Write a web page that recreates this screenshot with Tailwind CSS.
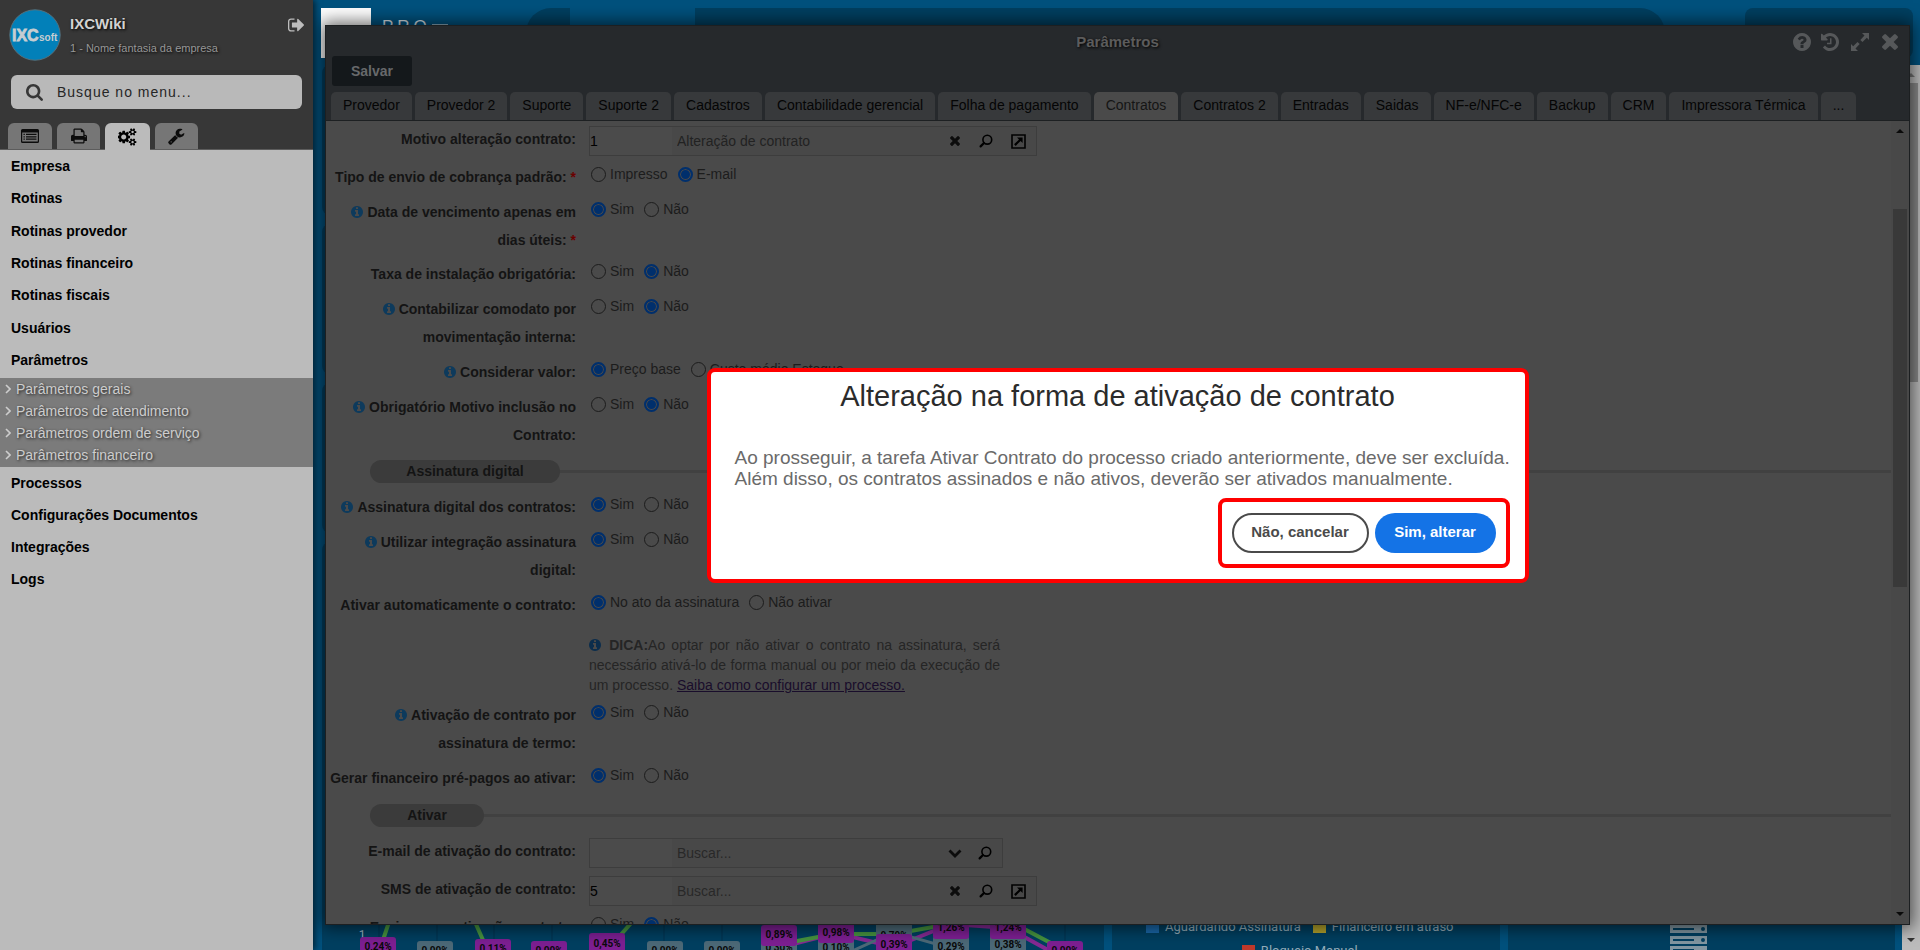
<!DOCTYPE html>
<html lang="pt-BR">
<head>
<meta charset="utf-8">
<meta name="viewport" content="width=device-width, initial-scale=1">
<title>IXCWiki - Parâmetros</title>
<script src="https://cdn.jsdelivr.net/npm/@tailwindcss/browser@4"></script>
</head>
<body class="flex h-screen overflow-hidden bg-[#00517d] font-['Liberation_Sans',Arial,sans-serif] text-sm text-black">

<svg class="hidden" aria-hidden="true">
  <symbol id="i-info" viewBox="128 128 1536 1536"><path d="M1152 1376v-160q0-14-9-23t-23-9h-96v-512q0-14-9-23t-23-9h-320q-14 0-23 9t-9 23v160q0 14 9 23t23 9h96v320h-96q-14 0-23 9t-9 23v160q0 14 9 23t23 9h448q14 0 23-9t9-23zm-128-896v-160q0-14-9-23t-23-9h-192q-14 0-23 9t-9 23v160q0 14 9 23t23 9h192q14 0 23-9t9-23zm640 416q0 209-103 385.500t-279.500 279.500-385.500 103-385.500-103-279.500-279.500-103-385.500 103-385.500 279.500-279.500 385.500-103 385.500 103 279.500 279.500 103 385.500z"/></symbol>
  <symbol id="i-search" viewBox="64 128 1664 1664"><path d="M1216 832q0-185-131.500-316.500t-316.500-131.500-316.500 131.500-131.500 316.500 131.500 316.500 316.500 131.500 316.500-131.500 131.500-316.500zm512 832q0 52-38 90t-90 38q-54 0-90-38l-343-342q-179 124-399 124-143 0-273.500-55.500t-225-150-150-225-55.500-273.500 55.500-273.500 150-225 225-150 273.500-55.500 273.500 55.500 225 150 150 225 55.500 273.500q0 220-124 399l343 343q37 37 37 90z"/></symbol>
  <symbol id="i-times" viewBox="302 302 1188 1188"><path d="M1490 1322q0 40-28 68l-136 136q-28 28-68 28t-68-28l-294-294-294 294q-28 28-68 28t-68-28l-136-136q-28-28-28-68t28-68l294-294-294-294q-28-28-28-68t28-68l136-136q28-28 68-28t68 28l294 294 294-294q28-28 68-28t68 28l136 136q28 28 28 68t-28 68l-294 294 294 294q28 28 28 68z" transform="translate(0 -64)"/></symbol>
  <symbol id="i-lupa" viewBox="0 0 14 14"><circle cx="8.300" cy="5.700" r="4.400" fill="none" stroke="currentColor" stroke-width="1.600"/><path d="M5 9 1.600 12.400" fill="none" stroke="currentColor" stroke-width="2.200" stroke-linecap="round"/></symbol>
  <symbol id="i-open" viewBox="0 0 15 15"><path d="M1 1h13v13H1z" fill="none" stroke="currentColor" stroke-width="1.600"/><path d="M6 3.400h5.600V9l-2-2-4.900 4.900-1.600-1.600L8 5.400z"/></symbol>
  <symbol id="i-down" viewBox="0 0 14 14"><path d="M1.500 4.500 7 10l5.500-5.500" fill="none" stroke="currentColor" stroke-width="2.800"/></symbol>
  <symbol id="i-right" viewBox="0 0 6 10"><path d="M1 1l4 4-4 4" fill="none" stroke="currentColor" stroke-width="1.600"/></symbol>
</svg>

<!-- Menu lateral -->
<aside class="z-20 flex w-[313px] shrink-0 flex-col bg-[#bbbbbb] shadow-[2px_0_6px_rgba(0,0,0,0.6)]">
  <header class="bg-[#373737]">
    <div class="flex items-start pt-[9px] pr-[9px] pl-[9px]">
      <svg class="size-[52px] shrink-0" viewBox="0 0 52 52" role="img" aria-label="IXCsoft">
        <circle cx="26" cy="26" r="25.200" fill="#0280b9" stroke="#55707c" stroke-width="1"/>
        <text x="3" y="32" fill="#c6cdd1" stroke="#c6cdd1" stroke-width=".8" font-family="Liberation Sans" font-weight="bold" font-size="16">IXC</text>
        <text x="30" y="32" fill="#c6cdd1" font-family="Liberation Sans" font-weight="bold" font-size="10">soft</text>
      </svg>
      <div class="flex-1 pl-[9px]">
        <h1 class="pt-[6px] text-[15px] leading-[18px] font-bold text-[#d2d2d2] [text-shadow:1px_1px_3px_#000]">IXCWiki</h1>
        <p class="pt-[8px] text-[11px] leading-[14px] text-[#979797] [text-shadow:1px_1px_3px_#000]">1 - Nome fantasia da empresa</p>
      </div>
      <button type="button" class="mt-[9px] text-[#bdbdbd]" aria-label="Sair"><svg class="h-[14px] w-4" viewBox="64 224 1568 1344" fill="currentColor"><path d="M704 1440q0 4 1 20t.5 26.500-3 23.500-10 19.500-20.500 6.500h-320q-119 0-203.500-84.500t-84.500-203.500v-704q0-119 84.500-203.500t203.500-84.500h320q13 0 22.500 9.500t9.500 22.500q0 4 1 20t.5 26.500-3 23.500-10 19.500-20.500 6.500h-320q-66 0-113 47t-47 113v704q0 66 47 113t113 47h312l11.500 1 11.500 3 8 5.500 7 9 2 13.500zm928-544q0 26-19 45l-544 544q-19 19-45 19t-45-19-19-45v-288h-448q-26 0-45-19t-19-45v-384q0-26 19-45t45-19h448v-288q0-26 19-45t45-19 45 19l544 544q19 19 19 45z"/></svg></button>
    </div>
    <label class="mx-[11px] mt-[14px] flex h-[34px] items-center rounded-md bg-[#b9b9b9] pl-[15px]">
      <svg class="size-[17px] shrink-0 text-[#373737]" fill="currentColor"><use href="#i-search"/></svg>
      <input type="text" aria-label="Busque no menu" placeholder="Busque no menu..." class="ml-[14px] min-w-0 flex-1 bg-transparent tracking-[1px] text-[#222] outline-none placeholder:text-[#262626]">
    </label>
    <nav class="mt-[14px] flex h-[27px] items-stretch gap-[5px] border-b border-[#5c5c5c] pl-2 text-[#0c0c0c]">
      <button type="button" aria-label="Lista" class="flex w-11 items-center justify-center rounded-t-md bg-[#767676]"><svg class="h-[14px] w-[18px]" viewBox="0 0 18 14" fill="currentColor"><path fill-rule="evenodd" d="M1.500 0h15A1.500 1.500 0 0 1 18 1.500v11a1.500 1.500 0 0 1-1.500 1.500h-15A1.500 1.500 0 0 1 0 12.500v-11A1.500 1.500 0 0 1 1.500 0zM1.200 3.500v9h15.600v-9z"/><path d="M2.500 4.800h1.300V6H2.500zM5 4.800h10.500V6H5zM2.500 7.200h1.300v1.200H2.500zM5 7.200h10.500v1.200H5zM2.500 9.600h1.300v1.200H2.500zM5 9.600h10.500v1.200H5z"/></svg></button>
      <button type="button" aria-label="Imprimir" class="flex w-[43px] items-center justify-center rounded-t-md bg-[#767676]"><svg class="size-4" viewBox="64 128 1664 1536" fill="currentColor"><path d="M448 1536h896v-256h-896v256zm0-640h896v-384h-160q-40 0-68-28t-28-68v-160h-640v640zm1152 64q0-26-19-45t-45-19-45 19-19 45 19 45 45 19 45-19 19-45zm128 0v416q0 13-9.500 22.500t-22.500 9.500h-224v160q0 40-28 68t-68 28h-960q-40 0-68-28t-28-68v-160h-224q-13 0-22.500-9.500t-9.500-22.500v-416q0-79 56.500-135.500t135.500-56.500h64v-544q0-40 28-68t68-28h672q40 0 88 20t76 48l152 152q28 28 48 76t20 88v256h64q79 0 135.500 56.500t56.500 135.500z"/></svg></button>
      <button type="button" aria-label="Configurações" class="-mb-[2px] flex w-[45px] items-center justify-center rounded-t-md bg-[#bbbbbb] text-black"><svg class="h-[18px] w-[19px]" viewBox="0 0 1920 1792" fill="currentColor"><path d="M832 896q0-106-75-181t-181-75-181 75-75 181 75 181 181 75 181-75 75-181zm768 512q0-52-38-90t-90-38-90 38-38 90q0 53 37.500 90.500t90.500 37.500 90.500-37.500 37.500-90.500zm0-1024q0-52-38-90t-90-38-90 38-38 90q0 53 37.500 90.500t90.500 37.500 90.500-37.500 37.500-90.500zm-384 421v185q0 10-7 19.500t-16 10.500l-155 24q-11 35-32 76 34 48 90 115 7 11 7 20 0 12-7 19-23 30-82.500 89.500t-78.500 59.500q-11 0-21-7l-115-90q-37 19-77 31-11 108-23 155-7 24-30 24h-186q-11 0-20-7.500t-10-17.500l-23-153q-34-10-75-31l-118 89q-7 7-20 7-11 0-21-8-144-133-144-160 0-9 7-19 10-14 41-53t47-61q-23-44-35-82l-152-24q-10-1-17-9.500t-7-19.500v-185q0-10 7-19.500t16-10.500l155-24q11-35 32-76-34-48-90-115-7-11-7-20 0-12 7-20 22-30 82-89t79-59q11 0 21 7l115 90q34-18 77-32 11-108 23-154 7-24 30-24h186q11 0 20 7.500t10 17.500l23 153q34 10 75 31l118-89q8-7 20-7 11 0 21 8 144 133 144 160 0 8-7 19-12 16-42 54t-45 60q23 48 34 82l152 23q10 2 17 10.500t7 19.500zm640 533v140q0 16-149 31-12 27-30 52 51 113 51 138 0 4-4 7-122 71-124 71-8 0-46-47t-52-68q-20 2-30 2t-30-2q-14 21-52 68t-46 47q-2 0-124-71-4-3-4-7 0-25 51-138-18-25-30-52-149-15-149-31v-140q0-16 149-31 13-29 30-52-51-113-51-138 0-4 4-7 4-2 35-20t59-34 30-16q8 0 46 46.500t52 67.500q20-2 30-2t30 2q51-71 92-112l6-2q4 0 124 70 4 3 4 7 0 25-51 138 17 23 30 52 149 15 149 31zm0-1024v140q0 16-149 31-12 27-30 52 51 113 51 138 0 4-4 7-122 71-124 71-8 0-46-47t-52-68q-20 2-30 2t-30-2q-14 21-52 68t-46 47q-2 0-124-71-4-3-4-7 0-25 51-138-18-25-30-52-149-15-149-31v-140q0-16 149-31 13-29 30-52-51-113-51-138 0-4 4-7 4-2 35-20t59-34 30-16q8 0 46 46.500t52 67.500q20-2 30-2t30 2q51-71 92-112l6-2q4 0 124 70 4 3 4 7 0 25-51 138 17 23 30 52 149 15 149 31z"/></svg></button>
      <button type="button" aria-label="Ferramentas" class="flex w-[43px] items-center justify-center rounded-t-md bg-[#767676]"><svg class="size-[17px]" viewBox="64 64 1728 1728" fill="currentColor"><path d="M448 1472q0-26-19-45t-45-19-45 19-19 45 19 45 45 19 45-19 19-45zm644-420l-682 682q-37 37-90 37-52 0-91-37l-106-108q-38-36-38-90 0-53 38-91l681-681q39 98 114.500 173.500t173.500 114.500zm634-435q0 39-23 106-47 134-164.500 217.500t-258.500 83.500q-185 0-316.500-131.500t-131.500-316.500 131.500-316.500 316.500-131.500q58 0 121.500 16.500t107.500 46.500q16 11 16 28t-16 28l-293 169v224l193 107q5-3 79-48.500t135.500-81 70.500-35.500q15 0 23.500 10t8.500 25z"/></svg></button>
    </nav>
  </header>
  <nav class="font-bold">
    <ul class="grid h-[228px] grid-rows-7 items-center pb-[2px] pl-[11px] leading-4">
      <li><a href="#">Empresa</a></li>
      <li><a href="#">Rotinas</a></li>
      <li><a href="#">Rotinas provedor</a></li>
      <li><a href="#">Rotinas financeiro</a></li>
      <li><a href="#">Rotinas fiscais</a></li>
      <li><a href="#">Usuários</a></li>
      <li><a href="#">Parâmetros</a></li>
    </ul>
    <ul class="bg-[#7b7b7b] pb-px leading-[22px] font-normal text-[#cdcdcd] [text-shadow:1px_1px_3px_#222]">
      <li><a href="#" class="flex items-center gap-[5px] pl-[5px]"><svg class="h-[10px] w-[6px]"><use href="#i-right"/></svg>Parâmetros gerais</a></li>
      <li><a href="#" class="flex items-center gap-[5px] pl-[5px]"><svg class="h-[10px] w-[6px]"><use href="#i-right"/></svg>Parâmetros de atendimento</a></li>
      <li><a href="#" class="flex items-center gap-[5px] pl-[5px]"><svg class="h-[10px] w-[6px]"><use href="#i-right"/></svg>Parâmetros ordem de serviço</a></li>
      <li><a href="#" class="flex items-center gap-[5px] pl-[5px]"><svg class="h-[10px] w-[6px]"><use href="#i-right"/></svg>Parâmetros financeiro</a></li>
    </ul>
    <ul class="grid h-[130px] grid-rows-4 items-center pb-[2px] pl-[11px] leading-4">
      <li><a href="#">Processos</a></li>
      <li><a href="#">Configurações Documentos</a></li>
      <li><a href="#">Integrações</a></li>
      <li><a href="#">Logs</a></li>
    </ul>
  </nav>
</aside>

<main class="relative flex min-w-0 flex-1 flex-col">
  <!-- Painel atrás da janela -->
  <div class="flex h-[65px] shrink-0 pt-2 pr-[7px] pl-2 text-white">
    <div class="size-[50px] bg-white"></div>
    <p class="pt-[9px] pl-[11px] text-[17px] leading-5 tracking-[4px] text-[#d5dfe5]">PRO</p>
    <div class="mt-[16px] ml-px h-px w-4 bg-[#8fb0c2]"></div>
    <div class="ml-auto flex w-[1387px] shrink-0">
      <div class="h-[50px] w-[44px] rounded-l-[25px] bg-[#003f60]"></div>
      <div class="ml-[125px] h-[50px] w-[970px] rounded-r-[25px] bg-[#003f60]"></div>
      <div class="ml-auto h-[50px] w-[168px] rounded-lg bg-[#003f60]"></div>
    </div>
  </div>
  <div class="flex min-h-0 flex-1">
    <div class="flex min-w-0 flex-1 flex-col gap-[9px] pr-[7px] pl-[9px]">
      <div class="h-[150px] shrink-0 rounded-lg bg-[#003f60]"></div>
      <div class="h-[150px] shrink-0 rounded-lg bg-[#003f60]"></div>
      <div class="h-[150px] shrink-0 rounded-lg bg-[#003f60]"></div>
      <div class="flex min-h-0 flex-1 items-stretch gap-2">
        <section class="flex w-[782px] shrink-0 flex-col justify-end rounded-t-lg bg-[#003f60]">
          <svg class="h-[26px] w-full" viewBox="322 924 782 26" preserveAspectRatio="xMinYMin slice" font-family="Roboto" font-size="10" font-weight="bold" text-anchor="middle" role="img" aria-label="Gráfico de percentuais">
            <path d="M379 924v26M437 924v26M494 924v26M552 924v26M664 924v26M722 924v26M1065 924v26" stroke="#00334e"/>
            <g fill="none" stroke-width="4">
              <path d="M780 945l17-2 39-10 58 14 57-23 57 4 40 22" stroke="#852a93"/>
              <path d="M850 952l44-20 70 20" stroke="#4c6977" stroke-width="3"/>
              <path d="M389 922l-6 18M475 922l8 18M632 922l-14 16" stroke="#46933f"/>
              <path d="M780 944l17-3 21-4 36-3 40 0 39-7 50-8 43 11 38 20" stroke="#46933f"/>
            </g>
            <text x="362" y="939" fill="#9db5c1" font-weight="normal" font-size="12">1</text>
            <g fill="#4c6977"><rect x="417" y="941" width="36" height="20" rx="3"/><rect x="647" y="941" width="36" height="20" rx="3"/><rect x="704" y="941" width="36" height="20" rx="3"/><rect x="761" y="938" width="36" height="20" rx="3"/><rect x="818" y="936" width="36" height="20" rx="3"/><rect x="876" y="920" width="36" height="24" rx="3"/><rect x="933" y="936" width="36" height="20" rx="3"/><rect x="990" y="934" width="36" height="20" rx="3"/></g>
            <g fill="#0a0a0a"><text x="435" y="954">0,00%</text><text x="665" y="954">0,00%</text><text x="722" y="954">0,00%</text><text x="779" y="951">0,30%</text><text x="836" y="951">0,10%</text><text x="894" y="939">0,79%</text><text x="951" y="950">0,29%</text><text x="1008" y="948">0,38%</text></g>
            <g fill="#7d1f92"><rect x="360" y="937" width="36" height="20" rx="3"/><rect x="475" y="939" width="36" height="20" rx="3"/><rect x="531" y="941" width="36" height="20" rx="3"/><rect x="589" y="933" width="36" height="20" rx="3"/><rect x="761" y="925" width="36" height="21" rx="3"/><rect x="818" y="922" width="36" height="21" rx="3"/><rect x="876" y="934" width="36" height="20" rx="3"/><rect x="933" y="918" width="36" height="21" rx="3"/><rect x="990" y="918" width="36" height="21" rx="3"/><rect x="1047" y="941" width="36" height="20" rx="3"/></g>
            <g fill="#0a0a0a"><text x="378" y="950">0,24%</text><text x="493" y="952">0,11%</text><text x="549" y="954">0,00%</text><text x="607" y="947">0,45%</text><text x="779" y="938">0,89%</text><text x="836" y="936">0,98%</text><text x="894" y="948">0,39%</text><text x="951" y="931">1,26%</text><text x="1008" y="931">1,24%</text><text x="1065" y="954">0,00%</text></g>
          </svg>
        </section>
        <section class="flex h-[417px] min-w-0 flex-1 flex-col justify-end gap-2 rounded-t-lg bg-[#003f60] font-['Roboto',sans-serif] text-[13px] leading-4 text-[#93abb8]">
          <div class="mr-3 flex justify-center gap-3">
            <span class="flex items-center gap-[6px]"><i class="h-3 w-[13px] bg-[#1a68aa]"></i>Aguardando Assinatura</span>
            <span class="flex items-center gap-[6px]"><i class="h-3 w-[13px] bg-[#b5a42c]"></i>Financeiro em atraso</span>
          </div>
          <div class="mr-3 flex justify-center"><span class="flex items-center gap-[6px]"><i class="h-3 w-[13px] bg-[#c0392b]"></i>Bloqueio Manual</span></div>
        </section>
        <section class="flex min-w-0 flex-1 items-end justify-center rounded-t-lg bg-[#003f60]">
          <svg class="mr-[26px] h-[28px] w-[37px]" viewBox="0 0 37 28" fill="#8297a2"><path d="M0 3h37v8H0zM0 14h37v8H0zM0 24h37v8H0z"/><path d="M3 6h21v2H3zM3 17h21v2H3zM3 27h21v1H3z" fill="#003f60"/><circle cx="33" cy="7" r="2" fill="#003f60"/><circle cx="33" cy="18" r="2" fill="#003f60"/></svg>
        </section>
      </div>
    </div>
    <div class="flex w-[18px] shrink-0 flex-col items-end bg-[#bcbcbc] pr-[2px]" aria-hidden="true">
      <svg class="mt-2 h-[4px] w-[14px]" viewBox="0 0 14 4"><path d="M3 4l4-4 4 4z" fill="#777"/></svg>
      <div class="mt-[6px] h-[299px] w-[14px] bg-[#8a8a8a]"></div>
      <svg class="mt-auto mb-2 h-[4px] w-[14px]" viewBox="0 0 14 4"><path d="M3 0l4 4 4-4z" fill="#333"/></svg>
    </div>
  </div>

  <!-- Janela Parâmetros -->
  <section class="absolute top-[25px] right-[10px] bottom-[25px] left-3 flex flex-col overflow-hidden border border-[#1c1f21] bg-[#26292c] shadow-[0_0_16px_3px_rgba(0,0,0,0.6)]">
    <header class="shrink-0">
      <div class="grid h-[30px] grid-cols-[1fr_auto_1fr] items-center">
        <span></span>
        <h2 class="pt-[2px] text-[15px] font-bold text-[#5c5c5c] [text-shadow:1px_1px_3px_#000]">Parâmetros</h2>
        <div class="flex items-center justify-end gap-[10px] pt-[2px] pr-[11px] text-[#56585a]">
          <button type="button" aria-label="Ajuda"><svg class="size-[18px]" viewBox="128 128 1536 1536" fill="currentColor"><path d="M1024 1376v-192q0-14-9-23t-23-9h-192q-14 0-23 9t-9 23v192q0 14 9 23t23 9h192q14 0 23-9t9-23zm256-672q0-88-55.500-163t-138.500-116-170-41q-243 0-371 213-15 24 8 42l132 100q7 6 19 6 16 0 25-12 53-68 86-92 34-24 86-24 48 0 85.500 26t37.500 59q0 38-20 61t-68 45q-63 28-115.500 86.500t-52.500 125.500v36q0 14 9 23t23 9h192q14 0 23-9t9-23q0-19 21.500-49.500t54.500-49.500q32-18 49-28.500t46-35 44.500-48 28-60.500 12.500-81zm384 192q0 209-103 385.500t-279.500 279.500-385.500 103-385.500-103-279.500-279.500-103-385.500 103-385.500 279.500-279.500 385.500-103 385.500 103 279.500 279.500 103 385.500z"/></svg></button>
          <button type="button" aria-label="Histórico"><svg class="size-[18px]" viewBox="128 128 1536 1536" fill="currentColor"><path d="M1664 896q0 156-61 298t-164 245-245 164-298 61q-172 0-327-72.500t-264-204.500q-7-10-6.500-22.500t8.500-20.500l137-138q10-9 25-9 16 2 23 12 73 95 179 147t225 52q104 0 198.500-40.500t163.500-109.500 109.500-163.500 40.500-198.500-40.500-198.500-109.500-163.500-163.500-109.500-198.500-40.500q-98 0-188 35.500t-160 101.500l137 138q31 30 14 69-17 40-59 40h-448q-26 0-45-19t-19-45v-448q0-42 40-59 39-17 69 14l130 129q107-101 244.500-156.500t284.500-55.500q156 0 298 61t245 164 164 245 61 298zm-640-288v448q0 14-9 23t-23 9h-320q-14 0-23-9t-9-23v-64q0-14 9-23t23-9h224v-352q0-14 9-23t23-9h64q14 0 23 9t9 23z"/></svg></button>
          <button type="button" aria-label="Expandir" class="ml-[2px]"><svg class="size-[18px]" viewBox="0 0 18 18" fill="currentColor"><path d="M11 0h7v7l-2.200-2.200-4.300 4.300-2.200-2.200 4.200-4.300zM0 11l2.200 2.200 4.300-4.300 2.200 2.200-4.200 4.300L7 18H0z"/></svg></button>
          <button type="button" aria-label="Fechar" class="ml-[3px]"><svg class="size-4" fill="currentColor"><use href="#i-times"/></svg></button>
        </div>
      </div>
      <div class="pl-[6px]">
        <button type="button" class="h-[30px] w-20 rounded-[3px] bg-[#14181b] font-bold text-[#67696b]">Salvar</button>
      </div>
      <nav class="mt-[6px] flex h-[29px] gap-[3px] overflow-hidden border-b border-[#1d2022] pl-[5px] whitespace-nowrap text-[#050505] [&>button]:shrink-0 [&>button]:rounded-t-[5px] [&>button]:bg-[#37393b] [&>button]:px-3 [&>button]:pb-[2px]">
        <button type="button">Provedor</button>
        <button type="button">Provedor 2</button>
        <button type="button">Suporte</button>
        <button type="button">Suporte 2</button>
        <button type="button">Cadastros</button>
        <button type="button">Contabilidade gerencial</button>
        <button type="button">Folha de pagamento</button>
        <button type="button" class="bg-[#4a4a4a]! text-[#151515]">Contratos</button>
        <button type="button">Contratos 2</button>
        <button type="button">Entradas</button>
        <button type="button">Saidas</button>
        <button type="button">NF-e/NFC-e</button>
        <button type="button">Backup</button>
        <button type="button">CRM</button>
        <button type="button">Impressora Térmica</button>
        <button type="button">...</button>
      </nav>
    </header>

    <div class="flex min-h-0 flex-1 bg-[#4a4a4a]">
      <form class="min-w-0 flex-1 overflow-hidden pt-[4px] text-[#1c1c1c] [&_[type=radio]]:size-[15px] [&_[type=radio]]:appearance-none [&_[type=radio]]:rounded-full [&_[type=radio]]:border [&_[type=radio]]:border-[#1c1c1c] [&_[type=radio]:checked]:border-2 [&_[type=radio]:checked]:border-[#002f6c] [&_[type=radio]:checked]:bg-[#002f6c] [&_[type=radio]:checked]:shadow-[inset_0_0_0_1px_#4a4a4a] [&_fieldset]:flex [&_fieldset]:pb-[7px] [&_fieldset_label]:flex [&_fieldset_label]:items-center [&_fieldset_label]:gap-1 [&_fieldset>div]:flex [&_fieldset>div]:h-[22px] [&_fieldset>div]:items-center [&_fieldset>div]:gap-[10px] [&_fieldset>div]:pl-[15px] [&_legend]:float-left [&_legend]:w-[250px] [&_legend]:shrink-0 [&_legend]:text-right [&_legend]:leading-7 [&_legend]:font-bold [&_legend]:whitespace-nowrap [&_legend]:text-[#141414] [&_legend>svg]:mr-1 [&_legend>svg]:inline [&_legend>svg]:size-3 [&_legend>svg]:align-[-1px] [&_legend>svg]:text-[#0d3a5c]">
        <div class="flex h-[38px]">
          <label for="motivo" class="w-[250px] shrink-0 text-right leading-[29px] font-bold text-[#141414]">Motivo alteração contrato:</label>
          <div class="mt-px ml-[13px] flex h-[30px] w-[448px] items-center border border-[#3d3d3d] bg-[#484848]">
            <input id="motivo" type="text" value="1" class="h-full w-[82px] bg-[#4b4b4b] text-black outline-none">
            <input type="text" aria-label="Descrição do motivo" value="Alteração de contrato" class="h-full min-w-0 flex-1 bg-transparent pl-[5px] text-[#222] outline-none">
            <button type="button" aria-label="Limpar" class="mr-[19px] text-[#0c0c0c]"><svg class="size-[10px]" fill="currentColor"><use href="#i-times"/></svg></button>
            <button type="button" aria-label="Buscar" class="mr-[18px]"><svg class="size-[14px] text-black"><use href="#i-lupa"/></svg></button>
            <button type="button" aria-label="Abrir" class="mr-[10px]"><svg class="size-[15px] text-black" fill="currentColor"><use href="#i-open"/></svg></button>
          </div>
        </div>

        <fieldset>
          <legend>Tipo de envio de cobrança padrão: <span class="text-[#6b0000]">*</span></legend>
          <div><label><input type="radio" name="envio">Impresso</label><label><input type="radio" name="envio" checked>E-mail</label></div>
        </fieldset>
        <fieldset class="pb-[6px]!">
          <legend><svg fill="currentColor"><use href="#i-info"/></svg>Data de vencimento apenas em<br>dias úteis: <span class="text-[#6b0000]">*</span></legend>
          <div><label><input type="radio" name="uteis" checked>Sim</label><label><input type="radio" name="uteis">Não</label></div>
        </fieldset>
        <fieldset>
          <legend>Taxa de instalação obrigatória:</legend>
          <div><label><input type="radio" name="taxa">Sim</label><label><input type="radio" name="taxa" checked>Não</label></div>
        </fieldset>
        <fieldset>
          <legend><svg fill="currentColor"><use href="#i-info"/></svg>Contabilizar comodato por<br>movimentação interna:</legend>
          <div><label><input type="radio" name="comodato">Sim</label><label><input type="radio" name="comodato" checked>Não</label></div>
        </fieldset>
        <fieldset>
          <legend><svg fill="currentColor"><use href="#i-info"/></svg>Considerar valor:</legend>
          <div><label><input type="radio" name="valor" checked>Preço base</label><label><input type="radio" name="valor">Custo médio Estoque</label></div>
        </fieldset>
        <fieldset>
          <legend><svg fill="currentColor"><use href="#i-info"/></svg>Obrigatório Motivo inclusão no<br>Contrato:</legend>
          <div><label><input type="radio" name="inclusao">Sim</label><label><input type="radio" name="inclusao" checked>Não</label></div>
        </fieldset>

        <div class="flex h-[37px] items-start pt-[4px] pl-11">
          <h3 class="w-[190px] rounded-full bg-[#3b3b3b] text-center leading-[23px] font-bold text-[#141414]">Assinatura digital</h3>
          <div class="mt-[10px] h-[3px] flex-1 bg-[#414141]"></div>
        </div>

        <fieldset>
          <legend><svg fill="currentColor"><use href="#i-info"/></svg>Assinatura digital dos contratos:</legend>
          <div><label><input type="radio" name="assinatura" checked>Sim</label><label><input type="radio" name="assinatura">Não</label></div>
        </fieldset>
        <fieldset>
          <legend><svg fill="currentColor"><use href="#i-info"/></svg>Utilizar integração assinatura<br>digital:</legend>
          <div><label><input type="radio" name="integracao" checked>Sim</label><label><input type="radio" name="integracao">Não</label></div>
        </fieldset>
        <fieldset>
          <legend>Ativar automaticamente o contrato:</legend>
          <div><label><input type="radio" name="ativar" checked>No ato da assinatura</label><label><input type="radio" name="ativar">Não ativar</label></div>
        </fieldset>

        <p class="ml-[263px] w-[411px] pt-[9px] pb-[6px] text-justify leading-5 text-[#252525]"><svg class="mr-[2px] inline size-3 align-[-1px] text-[#0b2d4c]" fill="currentColor"><use href="#i-info"/></svg> <b>DICA:</b>Ao optar por não ativar o contrato na assinatura, será necessário ativá-lo de forma manual ou por meio da execução de um processo. <a href="#" class="text-[#190d2b] underline">Saiba como configurar um processo.</a></p>

        <fieldset>
          <legend><svg fill="currentColor"><use href="#i-info"/></svg>Ativação de contrato por<br>assinatura de termo:</legend>
          <div><label><input type="radio" name="termo" checked>Sim</label><label><input type="radio" name="termo">Não</label></div>
        </fieldset>
        <fieldset>
          <legend>Gerar financeiro pré-pagos ao ativar:</legend>
          <div><label><input type="radio" name="prepago" checked>Sim</label><label><input type="radio" name="prepago">Não</label></div>
        </fieldset>

        <div class="flex h-[38px] items-start pt-[5px] pl-11">
          <h3 class="w-[114px] rounded-full bg-[#3b3b3b] text-center leading-[23px] font-bold text-[#141414]">Ativar</h3>
          <div class="mt-[10px] h-[3px] flex-1 bg-[#414141]"></div>
        </div>

        <div class="flex h-[38px]">
          <label for="email" class="w-[250px] shrink-0 text-right leading-7 font-bold text-[#141414]">E-mail de ativação do contrato:</label>
          <div class="mt-px ml-[13px] flex h-[30px] w-[414px] items-center border border-[#3d3d3d] bg-[#484848]">
            <input id="email" type="text" class="h-full w-[82px] bg-[#4b4b4b] text-black outline-none">
            <input type="text" aria-label="Buscar e-mail" placeholder="Buscar..." class="h-full min-w-0 flex-1 bg-transparent pl-[5px] outline-none placeholder:text-[#282828]">
            <button type="button" aria-label="Abrir lista" class="mr-4 text-[#0c0c0c]"><svg class="size-[14px]"><use href="#i-down"/></svg></button>
            <button type="button" aria-label="Buscar" class="mr-[10px]"><svg class="size-[14px] text-black"><use href="#i-lupa"/></svg></button>
          </div>
        </div>

        <div class="flex h-[38px]">
          <label for="sms" class="w-[250px] shrink-0 text-right leading-7 font-bold text-[#141414]">SMS de ativação de contrato:</label>
          <div class="mt-px ml-[13px] flex h-[30px] w-[448px] items-center border border-[#3d3d3d] bg-[#484848]">
            <input id="sms" type="text" value="5" class="h-full w-[82px] bg-[#4b4b4b] text-black outline-none">
            <input type="text" aria-label="Buscar SMS" placeholder="Buscar..." class="h-full min-w-0 flex-1 bg-transparent pl-[5px] outline-none placeholder:text-[#282828]">
            <button type="button" aria-label="Limpar" class="mr-[19px] text-[#0c0c0c]"><svg class="size-[10px]" fill="currentColor"><use href="#i-times"/></svg></button>
            <button type="button" aria-label="Buscar" class="mr-[18px]"><svg class="size-[14px] text-black"><use href="#i-lupa"/></svg></button>
            <button type="button" aria-label="Abrir" class="mr-[10px]"><svg class="size-[15px] text-black" fill="currentColor"><use href="#i-open"/></svg></button>
          </div>
        </div>

        <fieldset>
          <legend>Envia anexo ativação contrato:</legend>
          <div><label><input type="radio" name="anexo">Sim</label><label><input type="radio" name="anexo" checked>Não</label></div>
        </fieldset>
      </form>
      <div class="flex w-[18px] shrink-0 flex-col items-center bg-[#484848]" aria-hidden="true">
        <svg class="mt-2 h-[4px] w-2" viewBox="0 0 8 4"><path d="M0 4l4-4 4 4z" fill="#0a0a0a"/></svg>
        <div class="mt-[76px] h-[378px] w-[14px] bg-[#393939]"></div>
        <svg class="mt-auto mb-2 h-[4px] w-2" viewBox="0 0 8 4"><path d="M0 0l4 4 4-4z" fill="#0a0a0a"/></svg>
      </div>
    </div>

    <!-- Confirmação -->
    <div class="absolute inset-0 flex items-center justify-center">
      <div role="dialog" aria-labelledby="dlg-title" class="w-[822px] rounded-lg border-4 border-[#ff0000] bg-white">
        <h2 id="dlg-title" class="pt-[8px] text-center text-[29px] leading-8 text-[#2b2b2b]">Alteração na forma de ativação de contrato</h2>
        <p class="pt-[35px] pr-2 pl-[24px] text-[19px] leading-[21px] text-[#6a6a6a]">Ao prosseguir, a tarefa Ativar Contrato do processo criado anteriormente, deve ser excluída. Além disso, os contratos assinados e não ativos, deverão ser ativados manualmente.</p>
        <div class="flex justify-end pt-[9px] pr-[15px] pb-[11px]">
          <div class="flex gap-[6px] rounded-lg border-4 border-[#ff0000] px-[10px] py-[11px]">
            <button type="button" class="h-10 w-[137px] rounded-full border-2 border-[#4a4a4a] pb-px text-[15px] font-bold text-[#4a4a4a]">Não, cancelar</button>
            <button type="button" class="h-10 w-[121px] rounded-full bg-[#1473e6] pb-px text-[15px] font-bold text-white">Sim, alterar</button>
          </div>
        </div>
      </div>
    </div>
  </section>
</main>
</body>
</html>
